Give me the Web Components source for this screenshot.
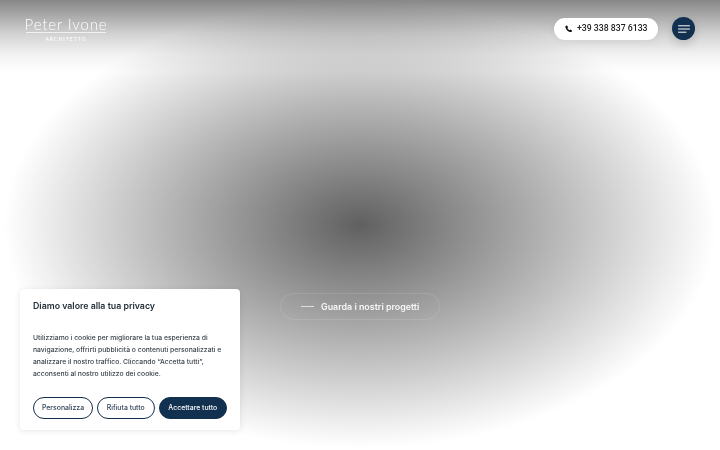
<!DOCTYPE html>
<html lang="it"><head><meta charset="utf-8"><title>Peter Ivone</title>
<style>
html,body{margin:0;padding:0;height:100%;overflow:hidden;background:#fff}
</style></head><body>
<template id="t-hero"><style>
:host{display:flex;flex-direction:column;width:720px;height:450px;position:relative;overflow:hidden;font-family:"Inter","Liberation Sans",sans-serif;
background:linear-gradient(180deg,rgba(0,0,0,.47) 0,rgba(0,0,0,.34) 15px,rgba(0,0,0,.17) 35px,rgba(0,0,0,.05) 55px,rgba(0,0,0,0) 72px),radial-gradient(closest-side,#606060 0,#b0b0b0 50%,#f1f1f1 90%,#fff 99%),#fff}
.cta{display:flex;justify-content:center;margin-top:237px}
</style><slot name="header"></slot><div class="cta"><slot name="cta"></slot></div><slot name="cookie"></slot></template>

<template id="t-header"><style>
:host{display:flex;align-items:flex-start;justify-content:space-between;padding:17px 25px 0 26px;height:39px}
.r{display:flex;align-items:center;gap:14px}
</style><slot name="logo"></slot><div class="r"><slot></slot></div></template>

<template id="t-logo"><style>
:host{display:flex;flex-direction:column;align-items:center;width:80px;color:#fff;font-family:"Lato","Liberation Sans",sans-serif;will-change:opacity}
.n{font-size:15px;font-weight:300;letter-spacing:.85px;line-height:14px;white-space:nowrap}
.l{width:100%;height:1px;background:rgba(255,255,255,.7);margin-top:1px}
.s{font-size:5px;font-weight:500;letter-spacing:1.05px;line-height:6px;margin-top:2.500px}
</style><span class="n">Peter Ivone</span><span class="l"></span><span class="s">ARCHITETTO</span></template>

<template id="t-phone"><style>
:host{display:flex;align-items:center;gap:4.500px;box-sizing:border-box;width:104px;height:22px;padding-left:11px;border-radius:11px;background:#fff;color:#222;font:500 8.700px/1 "Roboto","Liberation Sans",sans-serif;white-space:nowrap;box-shadow:0 2px 8px rgba(0,0,0,.05);will-change:opacity}
svg{width:7.500px;height:7.500px;flex:none}
</style><svg viewBox="0 0 24 24"><path fill="#111" d="M6.600 1.500 10 7.200 7.600 9.600c1.200 2.800 3.900 5.500 6.800 6.800l2.400-2.400 5.700 3.400-1.600 4.700c-.3.600-1 .9-1.700.9C10 22.600 1.400 14 1 4.800c0-.7.300-1.400.9-1.700z"/></svg><span><slot></slot></span></template>

<template id="t-menu"><style>
:host{display:flex;align-items:center;justify-content:center;width:23px;height:23px;border-radius:50%;background:#12304f;box-shadow:0 4px 10px rgba(0,0,0,.14)}
svg{width:12px;height:8px;display:block}
</style><svg viewBox="0 0 12 8" fill="none" stroke="#fff" stroke-width="1" stroke-linecap="round"><path d="M.5 .8H11.500M.5 4H11.500M.5 7.200H8"/></svg></template>

<template id="t-cta"><style>
:host{display:flex;align-items:center;gap:7px;box-sizing:border-box;width:160px;height:27px;padding-left:20px;border-radius:14px;border:1px solid rgba(255,255,255,.12);color:rgba(255,255,255,.92);font:600 8.900px/1 "Inter","Liberation Sans",sans-serif;white-space:nowrap;will-change:opacity}
i{display:block;width:13px;height:1px;background:rgba(255,255,255,.65)}
span{padding-top:1px}
</style><i></i><span><slot></slot></span></template>

<template id="t-cookie"><style>
:host{display:block;position:absolute;left:20px;top:289px;box-sizing:border-box;width:220px;height:141px;padding:11px 13px 0;background:#fff;border-radius:4px;box-shadow:0 1px 6px rgba(0,0,0,.1);font-family:"Inter","Liberation Sans",sans-serif;will-change:opacity}
h2{margin:0;font-size:8.800px;line-height:11px;font-weight:600;color:#1d2b36}
p{margin:21px 0 0;font-size:6.800px;line-height:12px;font-weight:500;color:#3b4248;white-space:nowrap}
.b{display:flex;gap:4px;margin-top:17px}
</style><h2><slot name="title"></slot></h2><p><slot name="text"></slot></p><div class="b"><slot name="buttons"></slot></div></template>

<template id="t-btn"><style>
:host{display:flex;align-items:center;justify-content:center;box-sizing:border-box;height:22px;border-radius:11px;border:1px solid #12304f;font:500 6.900px/1 "Inter","Liberation Sans",sans-serif;color:#2d3f52;background:#fff;white-space:nowrap}
:host([primary]){background:#12304f;color:#fff}
</style><slot></slot></template>

<pi-hero>
 <pi-header slot="header">
  <pi-logo slot="logo"></pi-logo>
  <pi-phone>+39 338 837 6133</pi-phone>
  <pi-menu></pi-menu>
 </pi-header>
 <pi-cta slot="cta">Guarda i nostri progetti</pi-cta>
 <pi-cookie slot="cookie">
  <span slot="title">Diamo valore alla tua privacy</span>
  <span slot="text">Utilizziamo i cookie per migliorare la tua esperienza di<br>navigazione, offrirti pubblicità o contenuti personalizzati e<br>analizzare il nostro traffico. Cliccando “Accetta tutti”,<br>acconsenti al nostro utilizzo dei cookie.</span>
  <pi-btn slot="buttons" style="width:60px">Personalizza</pi-btn>
  <pi-btn slot="buttons" style="width:57.500px">Rifiuta tutto</pi-btn>
  <pi-btn slot="buttons" primary style="width:68.500px">Accettare tutto</pi-btn>
 </pi-cookie>
</pi-hero>
<script>
for(const [n,t] of Object.entries({'pi-hero':'t-hero','pi-header':'t-header','pi-logo':'t-logo','pi-phone':'t-phone','pi-menu':'t-menu','pi-cta':'t-cta','pi-cookie':'t-cookie','pi-btn':'t-btn'})){
 customElements.define(n,class extends HTMLElement{constructor(){super();this.attachShadow({mode:'open'}).appendChild(document.getElementById(t).content.cloneNode(true))}});
}
</script>
</body></html>
